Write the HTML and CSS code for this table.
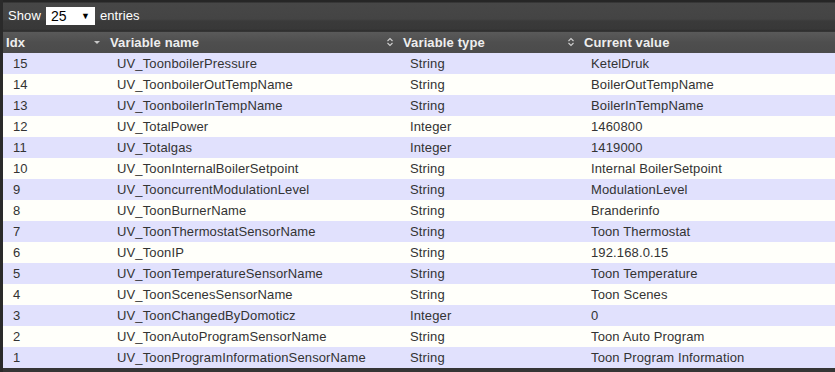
FILE: index.html
```html
<!DOCTYPE html>
<html>
<head>
<meta charset="utf-8">
<link rel="stylesheet" href="styles.css">
</head>
<body>
<div class="panel">
  <div class="toolbar">
    <span>Show</span>
    <span class="select"><span>25</span><span class="caret">&#9660;</span></span>
    <span>entries</span>
  </div>
  <table class="grid">
    <colgroup>
      <col class="c1"><col class="c2"><col class="c3"><col>
    </colgroup>
    <thead>
      <tr>
        <th>Idx<svg class="sort" width="8" height="10" viewBox="0 0 8 10"><path d="M1 4h6l-3 3z" fill="#c8c8c8"/></svg></th>
        <th>Variable name<svg class="sort" width="8" height="10" viewBox="0 0 8 10"><path d="M1.5 4L4 1.5 6.5 4M1.5 6L4 8.5 6.5 6" fill="none" stroke="#d0d0d0" stroke-width="1.1"/></svg></th>
        <th>Variable type<svg class="sort" width="8" height="10" viewBox="0 0 8 10"><path d="M1.5 4L4 1.5 6.5 4M1.5 6L4 8.5 6.5 6" fill="none" stroke="#d0d0d0" stroke-width="1.1"/></svg></th>
        <th>Current value</th>
      </tr>
    </thead>
    <tbody>
      <tr><td>15</td><td>UV_ToonboilerPressure</td><td>String</td><td>KetelDruk</td></tr>
      <tr><td>14</td><td>UV_ToonboilerOutTempName</td><td>String</td><td>BoilerOutTempName</td></tr>
      <tr><td>13</td><td>UV_ToonboilerInTempName</td><td>String</td><td>BoilerInTempName</td></tr>
      <tr><td>12</td><td>UV_TotalPower</td><td>Integer</td><td>1460800</td></tr>
      <tr><td>11</td><td>UV_Totalgas</td><td>Integer</td><td>1419000</td></tr>
      <tr><td>10</td><td>UV_ToonInternalBoilerSetpoint</td><td>String</td><td>Internal BoilerSetpoint</td></tr>
      <tr><td>9</td><td>UV_TooncurrentModulationLevel</td><td>String</td><td>ModulationLevel</td></tr>
      <tr><td>8</td><td>UV_ToonBurnerName</td><td>String</td><td>Branderinfo</td></tr>
      <tr><td>7</td><td>UV_ToonThermostatSensorName</td><td>String</td><td>Toon Thermostat</td></tr>
      <tr><td>6</td><td>UV_ToonIP</td><td>String</td><td>192.168.0.15</td></tr>
      <tr><td>5</td><td>UV_ToonTemperatureSensorName</td><td>String</td><td>Toon Temperature</td></tr>
      <tr><td>4</td><td>UV_ToonScenesSensorName</td><td>String</td><td>Toon Scenes</td></tr>
      <tr><td>3</td><td>UV_ToonChangedByDomoticz</td><td>Integer</td><td>0</td></tr>
      <tr><td>2</td><td>UV_ToonAutoProgramSensorName</td><td>String</td><td>Toon Auto Program</td></tr>
      <tr><td>1</td><td>UV_ToonProgramInformationSensorName</td><td>String</td><td>Toon Program Information</td></tr>
    </tbody>
  </table>
</div>
</body>
</html>
```
FILE: styles.css
```css
html, body {
  margin: 0;
  padding: 0;
  background: #353535;
  font-family: "Liberation Sans", Arial, sans-serif;
  font-size: 13px;
}
.panel {
  border-left: 3px solid #2a2a2a;
  height: 372px;
  overflow: hidden;
  background: #353535;
}
.toolbar {
  height: 31px;
  box-sizing: border-box;
  margin-left: -3px;
  padding: 0 0 0 8px;
  display: flex;
  align-items: center;
  gap: 4px;
  color: #fff;
  letter-spacing: 0.1px;
  background: linear-gradient(#262626 0, #262626 2px, #474747 3px, #444 19px, #3a3a3a 21px, #383838 29px, #2e2e2e 31px);
}
.select {
  display: inline-flex;
  align-items: center;
  justify-content: space-between;
  width: 49px;
  height: 18px;
  box-sizing: border-box;
  padding: 0 5px 0 5px;
  margin: 0 1px 0 1px;
  background: #fff;
  color: #000;
  font-size: 14px;
}
.caret {
  font-size: 9px;
}
.grid {
  width: 100%;
  border-collapse: collapse;
  table-layout: fixed;
  margin-top: 1px;
  letter-spacing: 0.13px;
}
.c1 { width: 104px; }
.c2 { width: 293px; }
.c3 { width: 181px; }
.grid th {
  height: 21px;
  padding: 0 6px 0 3px;
  text-align: left;
  color: #eee;
  font-weight: bold;
  font-size: 13px;
  background: linear-gradient(#5a5a5a, #4e4e4e 50%, #4b4b4b);
  white-space: nowrap;
}
.sort {
  float: right;
  margin-top: 2px;
}
.grid td {
  height: 21px;
  padding: 0 10px;
  color: #333;
  white-space: nowrap;
  box-sizing: border-box;
}
.grid tbody tr:nth-child(odd) td { background: #e1e1fd; }
.grid tbody tr:nth-child(even) td { background: #fffffa; }
```
